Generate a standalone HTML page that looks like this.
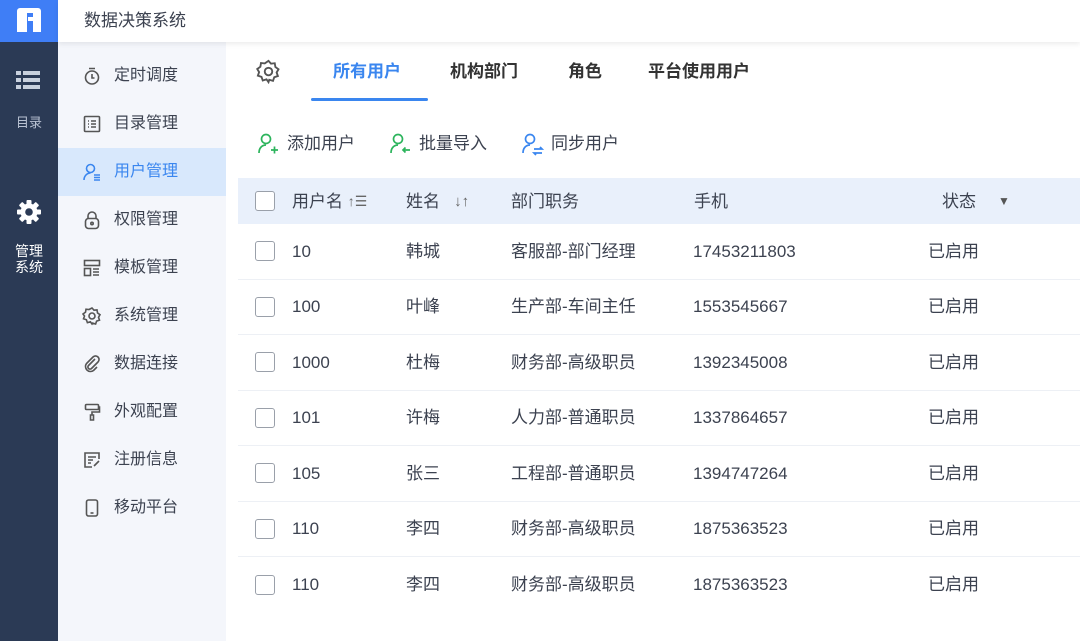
<!DOCTYPE html>
<html><head><meta charset="utf-8"><style>
*{margin:0;padding:0;box-sizing:border-box}
body{width:1080px;height:641px;overflow:hidden;background:#fff;font-family:"Liberation Sans","Noto Sans CJK SC",sans-serif;color:#3c4250;position:relative}
.abs{position:absolute}
.rail{left:0;top:0;width:58px;height:641px;background:#2b3a55}
.logo{left:0;top:0;width:58px;height:42px;background:#3f7ef6}
.hdr{left:58px;top:0;width:1022px;height:42px;background:#fff;box-shadow:0 2px 5px rgba(0,0,0,.08);font-size:17px;line-height:42px;padding-left:26px;color:#3c4250;z-index:2}
.side{left:58px;top:42px;width:168px;height:599px;background:#f4f6fb}
.item{position:absolute;left:0;width:168px;height:48px;font-size:16px;line-height:48px;padding-left:56px;color:#3c4250}
.item svg{position:absolute;left:24px;top:14px}
.item.on{background:#d8e8fc;color:#3a86ef}
.tab{top:60px;font-size:17px;line-height:24px;color:#333;font-weight:bold}
.th{left:238px;top:178px;width:842px;height:46px;background:#e9f0fb}
.row{position:absolute;left:238px;width:842px;height:55.5px;border-bottom:1px solid #edf0f5;font-size:17px;color:#3c4250}
.row span,.th span{position:absolute;top:0;height:100%;display:flex;align-items:center;white-space:nowrap;line-height:1}
.cb{position:absolute;left:17px;top:50%;margin-top:-10px;width:20px;height:20px;border:1.5px solid #9aa0aa;border-radius:3px;background:#fff}
.th span{font-size:17px;color:#3c4250}
</style></head><body>
<div class="abs rail"></div>
<div class="abs logo"><svg width="58" height="42" viewBox="0 0 58 42"><path d="M20 8h18a3 3 0 0 1 3 3v21h-8v-11h-5v-4h5v-4h-6v19h-10v-21a3 3 0 0 1 3-3z" fill="#fff"/></svg></div>
<div class="abs" style="left:16px;top:70px"><svg width="24" height="20"><g fill="#c9d1de"><rect x="0" y="1" width="5" height="4"/><rect x="7" y="1" width="17" height="4"/><rect x="0" y="8" width="5" height="4"/><rect x="7" y="8" width="17" height="4"/><rect x="0" y="15" width="5" height="4"/><rect x="7" y="15" width="17" height="4"/></g></svg></div>
<div class="abs" style="left:0;top:112px;width:58px;text-align:center;font-size:13px;color:#b9c2d2">目录</div>
<div class="abs" style="left:16px;top:199px"><svg width="26" height="26" viewBox="0 0 26 26"><g fill="#fff"><circle cx="13" cy="13" r="8.5"/><g><rect x="10.5" y="1" width="5" height="24" rx="1"/><rect x="10.5" y="1" width="5" height="24" rx="1" transform="rotate(45 13 13)"/><rect x="10.5" y="1" width="5" height="24" rx="1" transform="rotate(90 13 13)"/><rect x="10.5" y="1" width="5" height="24" rx="1" transform="rotate(135 13 13)"/></g></g><circle cx="13" cy="13" r="3.8" fill="#2b3a55"/></svg></div>
<div class="abs" style="left:0;top:243px;width:58px;text-align:center;font-size:14px;line-height:16px;color:#fff">管理<br>系统</div>
<div class="abs hdr">数据决策系统</div>
<div class="abs side">
<div class="item" style="top:10px"><svg width="20" height="20" fill="none" stroke="#555" stroke-width="1.6"><circle cx="10" cy="11.5" r="6.5"/><path d="M7 2.5h6M10 8v4h2.5"/></svg>定时调度</div>
<div class="item" style="top:58px"><svg width="20" height="20" fill="none" stroke="#555" stroke-width="1.6"><rect x="2.5" y="2.5" width="15" height="15" rx="1"/><path d="M6 7h1M9 7h5M6 10h1M9 10h5M6 13h1M9 13h5"/></svg>目录管理</div>
<div class="item on" style="top:106px"><svg width="20" height="20" fill="none" stroke="#3a86ef" stroke-width="1.6"><circle cx="8.5" cy="6.5" r="4"/><path d="M2 18c0-4 3-7 6.5-7M12 13h6M12 15.5h6M12 18h6"/></svg>用户管理</div>
<div class="item" style="top:154px"><svg width="20" height="20" fill="none" stroke="#555" stroke-width="1.6"><rect x="3.5" y="8.5" width="13" height="10" rx="3"/><path d="M6 8.5V6a4 4 0 0 1 8 0v2.5"/><circle cx="10" cy="13.5" r="1.2"/></svg>权限管理</div>
<div class="item" style="top:202px"><svg width="20" height="20" fill="none" stroke="#555" stroke-width="1.6"><rect x="2.5" y="2.5" width="15" height="5"/><rect x="2.5" y="10.5" width="6" height="7"/><path d="M11 11h6M11 14h6M11 17h6"/></svg>模板管理</div>
<div class="item" style="top:250px"><svg width="20" height="20" fill="none" stroke="#555" stroke-width="1.6"><path d="M10 2l2 2.2 3-.3.5 3 2.5 1.8-1.5 2.6 1 2.8-2.9 1-1 2.9-3-.9L10 18l-1.6-2.2-3 .9-1-2.9-2.9-1 1-2.8L1 8l2.5-1.8.5-3 3 .3z"/><circle cx="10" cy="10" r="3"/></svg>系统管理</div>
<div class="item" style="top:298px"><svg width="20" height="20" fill="none" stroke="#555" stroke-width="1.6"><path d="M13 5l-6.5 6.5a2 2 0 0 0 3 3L16 8a3.5 3.5 0 0 0-5-5L4.5 9.5a5 5 0 0 0 7 7L15 13"/></svg>数据连接</div>
<div class="item" style="top:346px"><svg width="20" height="20" fill="none" stroke="#555" stroke-width="1.6"><rect x="3.5" y="2.5" width="13" height="5" rx="1"/><path d="M16.5 5h1v5h-7.5v3M8.5 13h3v5h-3z"/></svg>外观配置</div>
<div class="item" style="top:394px"><svg width="20" height="20" fill="none" stroke="#555" stroke-width="1.6"><path d="M17 9V3H3v14h7M6 7h8M6 10h5M6 13h3M12 16l5-5"/></svg>注册信息</div>
<div class="item" style="top:442px"><svg width="20" height="20" fill="none" stroke="#555" stroke-width="1.6"><rect x="4.5" y="2" width="11" height="16" rx="2"/><path d="M8.5 15h3"/></svg>移动平台</div>
</div>
<div class="abs" style="left:256px;top:59px"><svg width="25" height="25" fill="none" stroke="#555" stroke-width="1.5" viewBox="0 0 20 20"><path d="M10 1.5l2 2.2 3-.3.5 3 2.5 1.8-1.5 2.6 1 2.8-2.9 1-1 2.9-3-.9L10 18.5l-1.6-2.2-3 .9-1-2.9-2.9-1 1-2.8L1 8l2.5-1.8.5-3 3 .3z"/><circle cx="10" cy="10" r="3"/></svg></div>
<div class="abs tab" style="left:333px;color:#3a86ef">所有用户</div>
<div class="abs" style="left:311px;top:98px;width:117px;height:3px;background:#3a86ef;border-radius:2px"></div>
<div class="abs tab" style="left:450px">机构部门</div>
<div class="abs tab" style="left:568px">角色</div>
<div class="abs tab" style="left:648px">平台使用用户</div>
<div class="abs" style="left:256px;top:132px;font-size:17px;line-height:24px;display:flex;align-items:center;gap:7px"><svg width="24" height="24" fill="none" stroke="#2cb45c" stroke-width="1.7"><circle cx="10" cy="7" r="4.5"/><path d="M3 21c0-5 3-8 7-8M15 18h7M18.5 14.5v7"/></svg>添加用户</div>
<div class="abs" style="left:388px;top:132px;font-size:17px;line-height:24px;display:flex;align-items:center;gap:7px"><svg width="24" height="24" fill="none" stroke="#2cb45c" stroke-width="1.7"><circle cx="10" cy="7" r="4.5"/><path d="M3 21c0-5 3-8 7-8M22 18h-7M17.5 15.5L15 18l2.5 2.5"/></svg>批量导入</div>
<div class="abs" style="left:520px;top:132px;font-size:17px;line-height:24px;display:flex;align-items:center;gap:7px"><svg width="24" height="24" fill="none" stroke="#3a86ef" stroke-width="1.7"><circle cx="10" cy="7" r="4.5"/><path d="M3 21c0-5 3-8 7-8M14 17h8l-2-2M22 21h-8l2 2"/></svg>同步用户</div>
<div class="abs th"><div class="cb"></div><span style="left:54px">用户名&nbsp;<small style="font-size:14px;color:#666">↑☰</small></span><span style="left:168px">姓名&nbsp;&nbsp;&nbsp;<b style="font-size:15px;color:#666">↓↑</b></span><span style="left:273px">部门职务</span><span style="left:456px">手机</span><span style="left:704px">状态</span><span style="left:760px;font-size:12px;color:#555">▼</span></div>
<div class="row" style="top:224px"><div class="cb"></div><span style="left:54px">10</span><span style="left:168px">韩城</span><span style="left:273px">客服部-部门经理</span><span style="left:455px">17453211803</span><span style="left:690px">已启用</span></div>
<div class="row" style="top:279.5px"><div class="cb"></div><span style="left:54px">100</span><span style="left:168px">叶峰</span><span style="left:273px">生产部-车间主任</span><span style="left:455px">1553545667</span><span style="left:690px">已启用</span></div>
<div class="row" style="top:335px"><div class="cb"></div><span style="left:54px">1000</span><span style="left:168px">杜梅</span><span style="left:273px">财务部-高级职员</span><span style="left:455px">1392345008</span><span style="left:690px">已启用</span></div>
<div class="row" style="top:390.5px"><div class="cb"></div><span style="left:54px">101</span><span style="left:168px">许梅</span><span style="left:273px">人力部-普通职员</span><span style="left:455px">1337864657</span><span style="left:690px">已启用</span></div>
<div class="row" style="top:446px"><div class="cb"></div><span style="left:54px">105</span><span style="left:168px">张三</span><span style="left:273px">工程部-普通职员</span><span style="left:455px">1394747264</span><span style="left:690px">已启用</span></div>
<div class="row" style="top:501.5px"><div class="cb"></div><span style="left:54px">110</span><span style="left:168px">李四</span><span style="left:273px">财务部-高级职员</span><span style="left:455px">1875363523</span><span style="left:690px">已启用</span></div>
<div class="row" style="top:557px;border:none"><div class="cb"></div><span style="left:54px">110</span><span style="left:168px">李四</span><span style="left:273px">财务部-高级职员</span><span style="left:455px">1875363523</span><span style="left:690px">已启用</span></div>
</body></html>
